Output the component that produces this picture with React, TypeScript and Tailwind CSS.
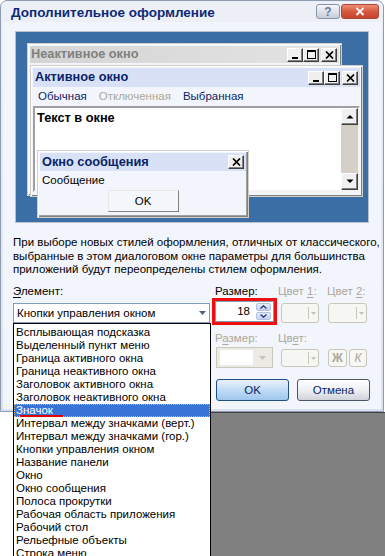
import React from "react";

const items = [
  "Всплывающая подсказка",
  "Выделенный пункт меню",
  "Граница активного окна",
  "Граница неактивного окна",
  "Заголовок активного окна",
  "Заголовок неактивного окна",
  "Значок",
  "Интервал между значками (верт.)",
  "Интервал между значками (гор.)",
  "Кнопки управления окном",
  "Название панели",
  "Окно",
  "Окно сообщения",
  "Полоса прокрутки",
  "Рабочая область приложения",
  "Рабочий стол",
  "Рельефные объекты",
  "Строка меню",
];

function CBtn({ children, className = "" }: { children: React.ReactNode; className?: string }) {
  return (
    <div
      className={
        "flex items-center justify-center bg-[#f0f0f0] border border-t-white border-l-white border-r-[#404040] border-b-[#404040] shadow-[inset_-1px_-1px_0_#808080] " +
        className
      }
    >
      {children}
    </div>
  );
}

function MinGlyph() {
  return (
    <svg width="8" height="8" viewBox="0 0 8 8">
      <rect x="1" y="6" width="6" height="2" fill="#000" />
    </svg>
  );
}
function MaxGlyph() {
  return (
    <svg width="9" height="9" viewBox="0 0 9 9">
      <rect x="0.5" y="0.5" width="8" height="8" fill="none" stroke="#000" />
      <rect x="0" y="0" width="9" height="2" fill="#000" />
    </svg>
  );
}
function CloseGlyph() {
  return (
    <svg width="9" height="8" viewBox="0 0 9 8">
      <path d="M1 0.5 L8 7.5 M8 0.5 L1 7.5" stroke="#000" strokeWidth="1.7" />
    </svg>
  );
}
function TriUp() {
  return (
    <svg width="8" height="5" viewBox="0 0 8 5">
      <polygon points="0.5,4.5 4,1 7.5,4.5" fill="#000" />
    </svg>
  );
}
function TriDown() {
  return (
    <svg width="8" height="5" viewBox="0 0 8 5">
      <polygon points="0.5,0.5 4,4 7.5,0.5" fill="#000" />
    </svg>
  );
}

function WinButtons() {
  return (
    <div className="ml-auto mr-[2px] flex">
      <CBtn className="w-[16px] h-[14px]">
        <MinGlyph />
      </CBtn>
      <CBtn className="w-[16px] h-[14px]">
        <MaxGlyph />
      </CBtn>
      <CBtn className="ml-[2px] w-[16px] h-[14px]">
        <CloseGlyph />
      </CBtn>
    </div>
  );
}

function Preview() {
  return (
    <div className="ml-[12px] mt-[9px] w-[354px] h-[192px] border border-[#b9c1cf]">
      <div className="relative w-full h-full bg-[#3a6ea5] overflow-hidden">
        {/* inactive window */}
        <div className="absolute left-[11px] top-[11px] w-[315px] h-[153px] bg-[#f2f5fb] border border-[#d4d0c8] shadow-[inset_1px_1px_0_#fff,inset_-1px_-1px_0_#808080]">
          <div className="mx-[2px] mt-[2px] h-[17px] bg-gradient-to-r from-[#d4d4d4] to-[#e4e4e4] flex items-center pl-[1px]">
            <span className="text-[12.75px] font-bold text-[#808080] leading-none">Неактивное окно</span>
            <WinButtons />
          </div>
        </div>
        {/* active window */}
        <div className="absolute left-[14px] top-[33px] w-[333px] h-[132px] bg-[#f2f5fb] border border-[#d4d0c8] shadow-[inset_1px_1px_0_#fff,inset_-1px_-1px_0_#808080] flex flex-col">
          <div className="mx-[2px] mt-[2px] h-[19px] bg-[#d8e1f5] flex items-center pl-[2px]">
            <span className="text-[12.75px] font-bold text-[#0a246a] leading-none">Активное окно</span>
            <WinButtons />
          </div>
          <div className="mx-[2px] h-[19px] flex items-center text-[#0a246a]">
            <span className="ml-[5px]">Обычная</span>
            <span className="ml-[12px] text-[#aca899]">Отключенная</span>
            <span className="ml-[12px]">Выбранная</span>
          </div>
          <div className="mx-[2px] h-[86px] bg-white border-2 border-t-[#a0a0a0] border-l-[#a0a0a0] border-b-[#f4f4f4] border-r-[#f4f4f4] flex">
            <div className="flex-1 pl-[2px] pt-[3px] font-bold text-[12.75px] leading-[14px]">Текст в окне</div>
            <div className="w-[17px] flex flex-col bg-[#d4d0c8]">
              <CBtn className="w-[17px] h-[17px]">
                <TriUp />
              </CBtn>
              <div className="flex-1" />
              <CBtn className="w-[17px] h-[17px]">
                <TriDown />
              </CBtn>
            </div>
          </div>
        </div>
        {/* message box */}
        <div className="absolute left-[21px] top-[118px] w-[212px] h-[68px] bg-[#f2f5fb] border border-[#d4d0c8] shadow-[inset_1px_1px_0_#fff,inset_-1px_-1px_0_#808080,inset_-2px_-2px_0_#a0a0a0]">
          <div className="mx-[2px] mt-[2px] h-[18px] bg-[#d8e1f5] flex items-center pl-[2px]">
            <span className="text-[12.75px] font-bold text-[#0a246a] leading-none">Окно сообщения</span>
            <div className="ml-auto mr-[2px]">
              <CBtn className="w-[16px] h-[14px]">
                <CloseGlyph />
              </CBtn>
            </div>
          </div>
          <div className="pl-[4px] h-[19px] flex items-center">Сообщение</div>
          <div className="flex justify-center">
            <div className="w-[71px] h-[22px] flex items-center justify-center bg-[#f4f7fc] border border-t-[#e8e8e8] border-l-[#e8e8e8] border-r-[#808080] border-b-[#808080]">
              OK
            </div>
          </div>
        </div>
      </div>
    </div>
  );
}

function DisabledColorBtn({ className = "" }: { className?: string }) {
  return (
    <div className={"rounded-[3px] border border-[#c9c7ba] bg-[#f6f6f3] flex items-center " + className}>
      <div className="flex-1" />
      <div className="w-px h-[12px] bg-[#c9c7ba]" />
      <div className="w-[9px] flex justify-center">
        <svg width="5" height="3" viewBox="0 0 5 3">
          <polygon points="0,0 5,0 2.5,3" fill="#c2c2c2" />
        </svg>
      </div>
    </div>
  );
}

function Dialog() {
  return (
    <div className="w-[384px] h-[412px] flex flex-col rounded-t-[7px] overflow-hidden border border-[#8e9ab0] bg-gradient-to-b from-[#edf0f6] to-[#dbe1ec]">
      {/* title bar */}
      <div className="h-[21px] flex items-start shrink-0">
        <span className="ml-[10px] mt-[4px] font-bold text-[13.5px] leading-[15px] text-[#0c2a78]">
          Дополнительное оформление
        </span>
        <div className="ml-auto mr-[4px] mt-[3px] flex gap-[1px]">
          <div className="w-[24px] h-[15px] rounded-[3px] border border-[#8a94a8] bg-gradient-to-b from-[#f6f8fb] to-[#c5ccd9] flex items-center justify-center text-[12px] font-bold text-[#6b7a96] leading-none">
            ?
          </div>
          <div className="w-[38px] h-[15px] rounded-[3px] border border-[#a84a38] bg-gradient-to-b from-[#eb8d74] via-[#d6583e] to-[#c4452d] flex items-center justify-center">
            <svg width="10" height="9" viewBox="0 0 10 9">
              <path d="M1.5 1 L8.5 8 M8.5 1 L1.5 8" stroke="#f4f4f4" strokeWidth="2" />
            </svg>
          </div>
        </div>
      </div>
      {/* client */}
      <div className="flex-1 mx-[2px] mb-[2px] bg-[#f2f5fb] flex flex-col">
        <Preview />
        <div className="mt-[13px] pl-[10px] h-[41px] leading-[13.5px] whitespace-nowrap">
          <div>При выборе новых стилей оформления, отличных от классического,</div>
          <div>выбранные в этом диалоговом окне параметры для большинства</div>
          <div>приложений будут переопределены стилем оформления.</div>
        </div>
        {/* labels row 1 */}
        <div className="mt-[8px] h-[13px] flex pl-[10px] whitespace-nowrap">
          <div className="w-[197px]">
            <span className="underline underline-offset-2">Э</span>лемент:
          </div>
          <div className="ml-[5px] w-[63px]">Размер:</div>
          <div className="w-[49px] text-[#aca899]">
            Цвет <span className="underline underline-offset-2">1</span>:
          </div>
          <div className="text-[#aca899]">
            Цвет <span className="underline underline-offset-2">2</span>:
          </div>
        </div>
        {/* controls row 1 */}
        <div className="h-[27px] flex pl-[10px]">
          <div className="w-[197px] mt-[5px] h-[20px] border border-[#7f9db9] bg-white flex items-center">
            <span className="pl-[3px] flex-1 whitespace-nowrap">Кнопки управления окном</span>
            <div className="w-[14px] flex justify-center">
              <svg width="7" height="4" viewBox="0 0 7 4">
                <polygon points="0,0 7,0 3.5,4" fill="#4d6185" />
              </svg>
            </div>
          </div>
          <div className="ml-[2px] w-[65px] h-[27px] border-[3px] border-[#ee1010]">
            <div className="w-full h-full border border-[#7f9db9] bg-white flex items-center">
              <span className="flex-1 text-right pr-[6px]">18</span>
              <div className="w-[15px] mr-[2px] flex flex-col gap-[1px]">
                <div className="h-[8px] rounded-[2px] border border-[#b3c2e6] bg-gradient-to-b from-[#e6edfc] to-[#c3d1f3] flex items-center justify-center">
                  <svg width="7" height="4" viewBox="0 0 7 4">
                    <path d="M0.5 3.5 L3.5 0.8 L6.5 3.5" fill="none" stroke="#24386e" strokeWidth="1.3" />
                  </svg>
                </div>
                <div className="h-[8px] rounded-[2px] border border-[#b3c2e6] bg-gradient-to-b from-[#e6edfc] to-[#c3d1f3] flex items-center justify-center">
                  <svg width="7" height="4" viewBox="0 0 7 4">
                    <path d="M0.5 0.5 L3.5 3.2 L6.5 0.5" fill="none" stroke="#24386e" strokeWidth="1.3" />
                  </svg>
                </div>
              </div>
            </div>
          </div>
          <DisabledColorBtn className="ml-[4px] mt-[5px] w-[38px] h-[20px]" />
          <DisabledColorBtn className="ml-[9px] mt-[5px] w-[39px] h-[20px]" />
        </div>
        {/* labels row 2 */}
        <div className="mt-[7px] h-[13px] flex pl-[10px] whitespace-nowrap text-[#aca899]">
          <div className="w-[197px]" />
          <div className="ml-[5px] w-[63px]">
            Р<span className="underline underline-offset-2">а</span>змер:
          </div>
          <div>
            Цв<span className="underline underline-offset-2">е</span>т:
          </div>
        </div>
        {/* controls row 2 */}
        <div className="h-[24px] flex pl-[10px]">
          <div className="w-[197px]" />
          <div className="ml-[6px] mt-[2px] w-[57px] h-[21px] border border-[#c9c7ba] bg-[#ebebe4] flex items-center">
            <div className="ml-[3px] w-[33px] h-[15px] bg-white" />
            <div className="flex-1 flex justify-center">
              <svg width="7" height="4" viewBox="0 0 7 4">
                <polygon points="0,0 7,0 3.5,4" fill="#c2c2c2" />
              </svg>
            </div>
          </div>
          <DisabledColorBtn className="ml-[8px] mt-[4px] w-[38px] h-[18px]" />
          <div className="ml-[9px] mt-[4px] w-[19px] h-[18px] rounded-[3px] border border-[#c9c7ba] bg-[#f6f6f3] flex items-center justify-center font-bold text-[#aca899] text-[12px]">
            Ж
          </div>
          <div className="ml-[2px] mt-[4px] w-[18px] h-[18px] rounded-[3px] border border-[#c9c7ba] bg-[#f6f6f3] flex items-center justify-center italic text-[#aca899] text-[12px]">
            К
          </div>
        </div>
        {/* buttons */}
        <div className="mt-[10px] h-[22px] flex pl-[213px]">
          <div className="w-[73px] h-[22px] rounded-[3px] border border-[#1f4f86] bg-gradient-to-b from-[#eaf3fc] via-[#c1dbf5] to-[#9ec7ee] flex items-center justify-center text-[#0a246a]">
            OK
          </div>
          <div className="ml-[8px] w-[73px] h-[22px] rounded-[3px] border border-[#4a5667] bg-gradient-to-b from-white via-[#eef0f3] to-[#cfd3d9] flex items-center justify-center text-[#0a246a]">
            Отмена
          </div>
        </div>
      </div>
    </div>
  );
}

export default function App() {
  return (
    <div className="w-[385px] h-[556px] overflow-hidden relative bg-white font-['Liberation_Sans',Arial,sans-serif] text-[11.5px] leading-[13px] text-black">
      <Dialog />
      <div className="flex h-[144px]">
        <div className="w-[13px] bg-white" />
        <div className="flex-1 bg-[#808080] border-t border-[#404040]" />
      </div>
      {/* dropdown list overlay */}
      <div className="absolute left-[13px] top-[323px] w-[198px] h-[240px] border border-black bg-white pt-[2px]">
        {items.map((it) =>
          it === "Значок" ? (
            <div key={it} className="relative h-[13px] leading-[13px] pl-[2px] whitespace-nowrap bg-[#3874d8] text-white">
              {it}
              <div className="absolute inset-0 border border-dotted border-[#e9b24e]" />
              <div className="absolute left-[6px] bottom-[0px] w-[43px] h-[2px] bg-[#e00000]" />
            </div>
          ) : (
            <div key={it} className="h-[13px] leading-[13px] pl-[2px] whitespace-nowrap">
              {it}
            </div>
          )
        )}
      </div>
    </div>
  );
}
